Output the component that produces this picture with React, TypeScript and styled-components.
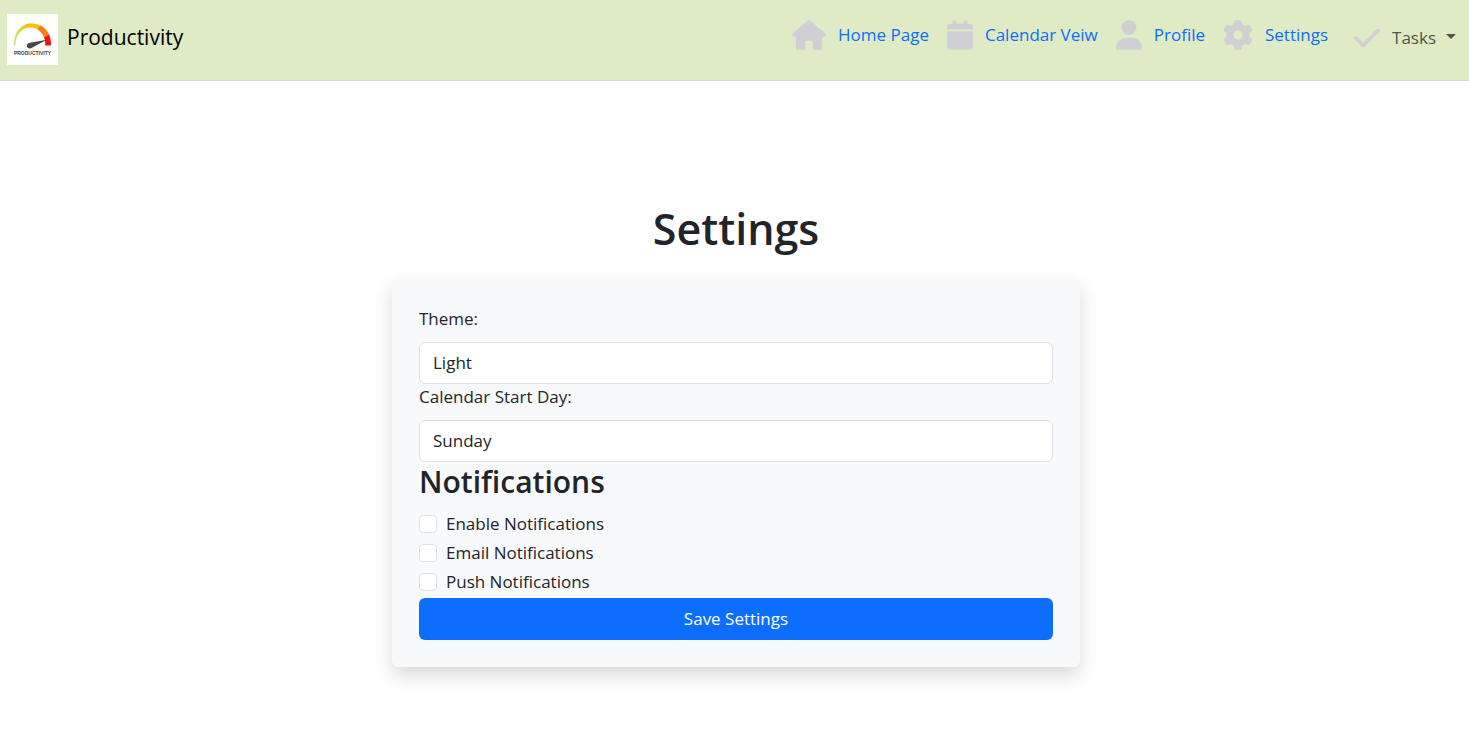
import React from "react";
import styled, { createGlobalStyle } from "styled-components";
import { FaHouse, FaCalendar, FaUser, FaGear, FaCheck } from "react-icons/fa6";

const GlobalStyle = createGlobalStyle`
  *, *::before, *::after { box-sizing: border-box; }
  body {
    margin: 0;
    background: #fff;
    color: #212529;
    font-family: "Segoe UI", "Open Sans", "Noto Sans", sans-serif;
    font-size: 17px;
    line-height: 26px;
  }
`;

const Header = styled.header`
  display: flex;
  align-items: flex-start;
  justify-content: space-between;
  padding: 14px 13px 15px 7px;
  background: #dfebc5;
  border-bottom: 1px solid #d8d8dc;
`;

const Brand = styled.a`
  display: flex;
  align-items: center;
  gap: 9px;
  color: #000;
  font-size: 21px;
  line-height: 32px;
  text-decoration: none;

  svg { display: block; }
  span { padding-bottom: 6px; }
`;

const Nav = styled.nav`
  display: flex;
  align-items: flex-start;
  gap: 18px;
  padding-top: 6px;
`;

const NavIcon = styled.span<{ $width: number }>`
  display: block;
  width: ${({ $width }) => $width}px;
  height: 30px;
  color: #d0cfd4;

  svg { display: block; width: 100%; height: 100%; }
`;

const NavLink = styled.a`
  display: flex;
  align-items: center;
  gap: 12px;
  color: #0d6efd;
  text-decoration: none;
`;

const TasksToggle = styled.button`
  display: flex;
  align-items: center;
  gap: 12px;
  margin: 3px 0 0 8px;
  padding: 0;
  border: 0;
  background: none;
  color: #4f5548;
  font: inherit;
  cursor: pointer;
`;

const Caret = styled.span`
  border-top: 5px solid currentColor;
  border-left: 5px solid transparent;
  border-right: 5px solid transparent;
  margin: 0 0 3px -2px;
`;

const Main = styled.main`
  display: flex;
  flex-direction: column;
  align-items: center;
  padding: 121px 24px 48px 27px;
`;

const Title = styled.h1`
  margin: 0 0 24px;
  font-size: 43px;
  line-height: 53px;
  font-weight: 600;
`;

const Card = styled.form`
  width: 100%;
  max-width: 688px;
  padding: 27px;
  border-radius: 6px;
  background: #f8f9fb;
  box-shadow: 0 9px 18px rgba(0, 0, 0, 0.15);
`;

const FieldLabel = styled.label`
  display: block;
  margin-bottom: 10px;
`;

const Select = styled.select`
  display: block;
  width: 100%;
  height: 42px;
  padding: 0 13px;
  border: 1px solid #dee2e6;
  border-radius: 6px;
  appearance: none;
  background: #fff;
  color: inherit;
  font: inherit;
`;

const SectionTitle = styled.h2`
  margin: 0 0 9px;
  font-size: 30px;
  line-height: 40px;
  font-weight: 600;
`;

const CheckRow = styled.label`
  display: flex;
  align-items: center;
  gap: 9px;
  width: fit-content;
  padding-bottom: 3px;
`;

const Checkbox = styled.input`
  width: 18px;
  height: 18px;
  margin: 0;
  border: 1px solid #dee2e6;
  border-radius: 4px;
  appearance: none;
  background: #fff;

  &:checked {
    border-color: #0d6efd;
    background: #0d6efd;
  }
`;

const SaveButton = styled.button`
  display: block;
  width: 100%;
  height: 42px;
  padding: 0;
  border: 0;
  border-radius: 6px;
  background: #0d6efd;
  color: #fff;
  font: inherit;
  cursor: pointer;
`;

const Logo = () => (
  <svg width="51" height="51" viewBox="0 0 51 51" aria-hidden="true">
    <defs>
      <linearGradient id="gauge" x1="0" y1="1" x2="1" y2="0">
        <stop offset="0" stopColor="#c9e08a" />
        <stop offset="0.5" stopColor="#cfdc2c" />
        <stop offset="1" stopColor="#f8c40c" />
      </linearGradient>
    </defs>
    <rect width="51" height="51" fill="#fff" />
    <path d="M7 31.500C6.500 19 14 9.500 24 9.500L24 13.200C15 13.500 8.500 20 8.300 31.500Z" fill="url(#gauge)" />
    <path d="M19 10.300C24 8.800 29 9.300 33 11.300L30.300 15.600C27 13.500 23 12.800 19.500 13.800Z" fill="#fdbf0a" />
    <path d="M33 11.300C37.500 13.500 40.300 16.800 42 20.500L37 23.200C35.700 20 33.500 17.200 30.300 15.600Z" fill="#fb7d0c" />
    <path d="M42 20.500C43.500 24 44.200 27.500 44 31.500L38.200 31.500C38.400 28.500 38 25.700 37 23.200Z" fill="#fb1010" />
    <path d="M39.800 25.800L24.500 34C22.500 35.300 20 34.200 19.800 32C19.700 30 21.500 28.700 23.200 28.800Z" fill="#48484a" />
    <text x="25.500" y="41" textAnchor="middle" fontSize="5" fontWeight="700" fontFamily="Liberation Sans Narrow, Liberation Sans, sans-serif" fill="#444">PRODUCTIVITY</text>
  </svg>
);

const links = [
  { label: "Home Page", Icon: FaHouse, width: 34 },
  { label: "Calendar Veiw", Icon: FaCalendar, width: 26 },
  { label: "Profile", Icon: FaUser, width: 26 },
  { label: "Settings", Icon: FaGear, width: 30 },
];

const options = ["Enable Notifications", "Email Notifications", "Push Notifications"];

export default function App() {
  return (
    <>
      <GlobalStyle />
      <Header>
        <Brand href="#">
          <Logo />
          <span>Productivity</span>
        </Brand>
        <Nav>
          {links.map(({ label, Icon, width }) => (
            <NavLink key={label} href="#">
              <NavIcon $width={width}>
                <Icon />
              </NavIcon>
              {label}
            </NavLink>
          ))}
          <TasksToggle type="button" aria-haspopup="menu">
            <NavIcon $width={26}>
              <FaCheck />
            </NavIcon>
            Tasks
            <Caret />
          </TasksToggle>
        </Nav>
      </Header>
      <Main>
        <Title>Settings</Title>
        <Card onSubmit={(e) => e.preventDefault()}>
          <FieldLabel htmlFor="theme">Theme:</FieldLabel>
          <Select id="theme" defaultValue="Light">
            <option>Light</option>
            <option>Dark</option>
          </Select>
          <FieldLabel htmlFor="start-day">Calendar Start Day:</FieldLabel>
          <Select id="start-day" defaultValue="Sunday">
            <option>Sunday</option>
            <option>Monday</option>
          </Select>
          <SectionTitle>Notifications</SectionTitle>
          {options.map((label) => (
            <CheckRow key={label}>
              <Checkbox type="checkbox" />
              {label}
            </CheckRow>
          ))}
          <SaveButton type="submit">Save Settings</SaveButton>
        </Card>
      </Main>
    </>
  );
}
